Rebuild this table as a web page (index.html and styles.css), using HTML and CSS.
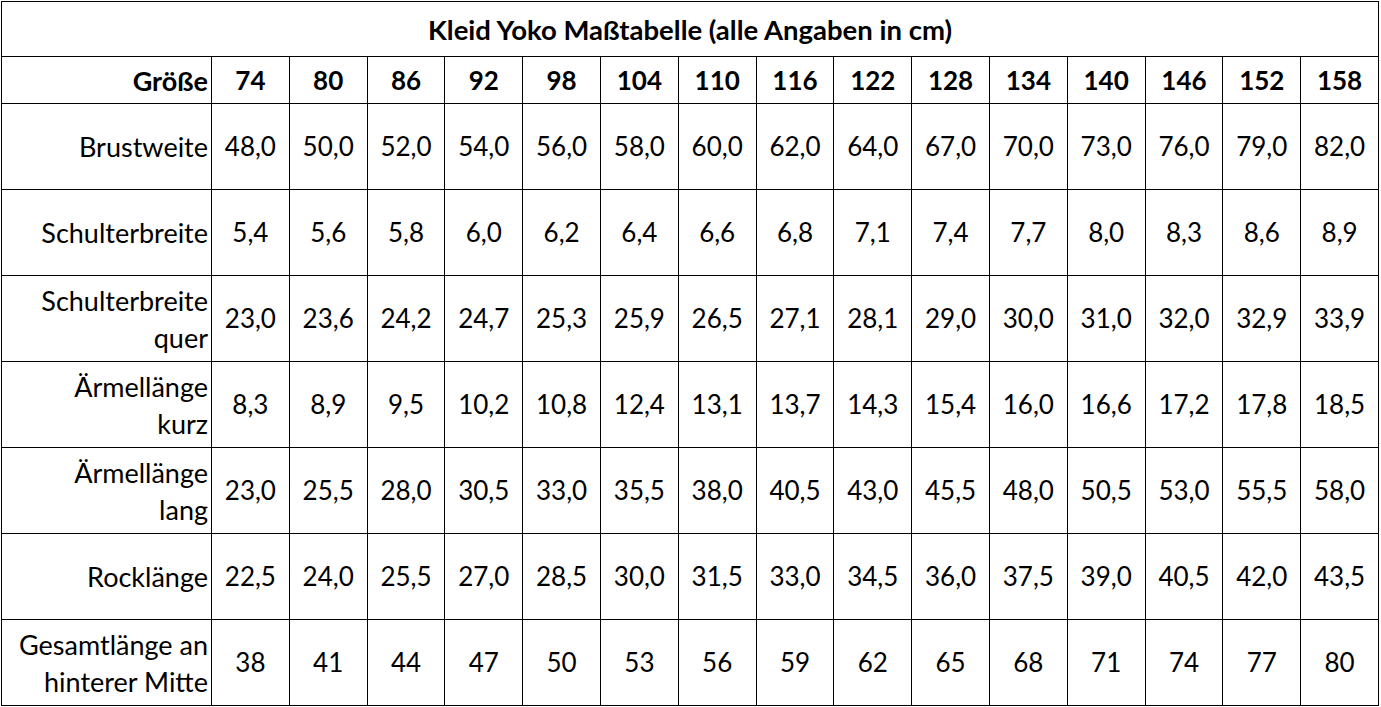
FILE: index.html
```html
<!DOCTYPE html>
<html lang="de">
<head>
<meta charset="utf-8">
<title>Kleid Yoko Maßtabelle</title>
<link rel="stylesheet" href="styles.css">
</head>
<body>
<table class="sizes">
  <colgroup>
    <col class="c-label">
    <col span="15" class="c-val">
  </colgroup>
  <thead>
    <tr class="r-title"><th colspan="16">Kleid Yoko Maßtabelle (alle Angaben in cm)</th></tr>
    <tr class="r-head">
      <th class="lbl">Größe</th>
      <th>74</th><th>80</th><th>86</th><th>92</th><th>98</th><th>104</th><th>110</th><th>116</th><th>122</th><th>128</th><th>134</th><th>140</th><th>146</th><th>152</th><th>158</th>
    </tr>
  </thead>
  <tbody>
    <tr><td class="lbl">Brustweite</td><td>48,0</td><td>50,0</td><td>52,0</td><td>54,0</td><td>56,0</td><td>58,0</td><td>60,0</td><td>62,0</td><td>64,0</td><td>67,0</td><td>70,0</td><td>73,0</td><td>76,0</td><td>79,0</td><td>82,0</td></tr>
    <tr><td class="lbl">Schulterbreite</td><td>5,4</td><td>5,6</td><td>5,8</td><td>6,0</td><td>6,2</td><td>6,4</td><td>6,6</td><td>6,8</td><td>7,1</td><td>7,4</td><td>7,7</td><td>8,0</td><td>8,3</td><td>8,6</td><td>8,9</td></tr>
    <tr><td class="lbl">Schulterbreite<br>quer</td><td>23,0</td><td>23,6</td><td>24,2</td><td>24,7</td><td>25,3</td><td>25,9</td><td>26,5</td><td>27,1</td><td>28,1</td><td>29,0</td><td>30,0</td><td>31,0</td><td>32,0</td><td>32,9</td><td>33,9</td></tr>
    <tr><td class="lbl">Ärmellänge<br>kurz</td><td>8,3</td><td>8,9</td><td>9,5</td><td>10,2</td><td>10,8</td><td>12,4</td><td>13,1</td><td>13,7</td><td>14,3</td><td>15,4</td><td>16,0</td><td>16,6</td><td>17,2</td><td>17,8</td><td>18,5</td></tr>
    <tr><td class="lbl">Ärmellänge<br>lang</td><td>23,0</td><td>25,5</td><td>28,0</td><td>30,5</td><td>33,0</td><td>35,5</td><td>38,0</td><td>40,5</td><td>43,0</td><td>45,5</td><td>48,0</td><td>50,5</td><td>53,0</td><td>55,5</td><td>58,0</td></tr>
    <tr><td class="lbl">Rocklänge</td><td>22,5</td><td>24,0</td><td>25,5</td><td>27,0</td><td>28,5</td><td>30,0</td><td>31,5</td><td>33,0</td><td>34,5</td><td>36,0</td><td>37,5</td><td>39,0</td><td>40,5</td><td>42,0</td><td>43,5</td></tr>
    <tr><td class="lbl">Gesamtlänge an<br>hinterer Mitte</td><td>38</td><td>41</td><td>44</td><td>47</td><td>50</td><td>53</td><td>56</td><td>59</td><td>62</td><td>65</td><td>68</td><td>71</td><td>74</td><td>77</td><td>80</td></tr>
  </tbody>
</table>
</body>
</html>
```
FILE: styles.css
```css
html, body {
  margin: 0;
  padding: 0;
  background: #ffffff;
}
body {
  padding: 1px 0 0 1px;
  font-family: Lato, "Open Sans", "Liberation Sans", sans-serif;
  color: #000;
}
.sizes {
  border-collapse: collapse;
  table-layout: fixed;
  width: 1378px;
  border: 1.5px solid #000;
}
.c-label { width: 210px; }
.sizes th,
.sizes td {
  border: 1px solid #000;
  padding: 0 3px;
  text-align: center;
  vertical-align: middle;
  font-size: 26px;
  line-height: 37px;
  white-space: nowrap;
  overflow: hidden;
}
.sizes th { font-weight: 700; }
.sizes td { font-weight: 400; }
.sizes .lbl { text-align: right; font-size: 27px; }
.r-title th { height: 54px; font-size: 27.5px; }
.r-head th { height: 46px; }
.sizes tbody td { height: 85px; }
```
